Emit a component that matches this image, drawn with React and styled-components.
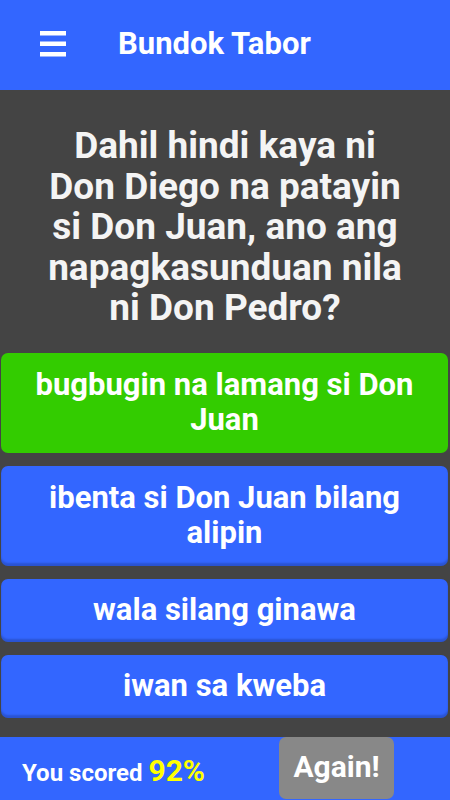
import React from 'react';
import styled, { createGlobalStyle } from 'styled-components';

const GlobalStyle = createGlobalStyle`
    html, body {
        margin: 0;
        padding: 0;
        background: #444444;
    }
    body {
        font-family: Roboto, "Liberation Sans", sans-serif;
    }
`;

const answers = [
    { text: 'bugbugin na lamang si Don Juan', correct: true, tall: true },
    { text: 'ibenta si Don Juan bilang alipin', tall: true },
    { text: 'wala silang ginawa' },
    { text: 'iwan sa kweba' },
];

function MenuIcon() {
    return (
        <svg width="26" height="27" viewBox="0 0 26 27">
            <rect x="0" y="1" width="26" height="4.5" fill="#fff" />
            <rect x="0" y="11.5" width="26" height="4.5" fill="#fff" />
            <rect x="0" y="22" width="26" height="4.5" fill="#fff" />
        </svg>
    );
}

function App() {
    return (
        <Screen>
            <GlobalStyle />
            <Header>
                <MenuButton><MenuIcon /></MenuButton>
                <Title>Bundok Tabor</Title>
            </Header>
            <Question>
                Dahil hindi kaya ni Don Diego na patayin si Don Juan, ano ang napagkasunduan nila ni Don Pedro?
            </Question>
            <Answers>
                {answers.map((a) => (
                    <Answer key={a.text} $correct={a.correct} $tall={a.tall}>
                        {a.text}
                    </Answer>
                ))}
            </Answers>
            <Footer>
                <Score>
                    You scored <Percent>92%</Percent>
                </Score>
                <AgainButton>Again!</AgainButton>
            </Footer>
        </Screen>
    );
}

const Screen = styled.div`
    display: flex;
    flex-direction: column;
    width: 450px;
    height: 800px;
    background: #444444;
    overflow: hidden;
`;

const Header = styled.div`
    display: flex;
    align-items: center;
    height: 90px;
    flex-shrink: 0;
    background: #3366ff;
    padding-left: 40px;
    box-sizing: border-box;
`;

const MenuButton = styled.div`
    display: flex;
    width: 26px;
    height: 27px;
    margin-right: 52px;
    margin-top: -4px;
`;

const Title = styled.div`
    color: #fff;
    font-size: 31px;
    font-weight: 700;
    margin-top: -4px;
`;

const Question = styled.div`
    color: #f4f4f4;
    font-size: 37px;
    font-weight: 700;
    line-height: 40.5px;
    text-align: center;
    padding: 36px 40px 0;
    height: 263px;
    box-sizing: border-box;
    flex-shrink: 0;
`;

const Answers = styled.div`
    display: flex;
    flex-direction: column;
    gap: 13px;
    padding: 0 2px 0 1px;
`;

const Answer = styled.div`
    display: flex;
    align-items: center;
    justify-content: center;
    text-align: center;
    height: ${(p) => (p.$tall ? '100px' : '63px')};
    box-sizing: border-box;
    padding: 0 26px 3px;
    border-radius: 7px;
    background: ${(p) => (p.$correct ? '#33cc00' : '#3366ff')};
    box-shadow: ${(p) => (p.$correct ? 'none' : 'inset 0 -3px 2px rgba(0, 0, 0, 0.18)')};
    color: #fff;
    font-size: 31px;
    font-weight: 700;
    line-height: 35px;
`;

const Footer = styled.div`
    display: flex;
    align-items: center;
    justify-content: space-between;
    margin-top: auto;
    height: 63px;
    background: #3366ff;
    padding-left: 22px;
    padding-right: 56px;
    box-sizing: border-box;
`;

const Score = styled.div`
    color: #fff;
    font-size: 24px;
    font-weight: 700;
    margin-top: 4px;
`;

const Percent = styled.span`
    color: #ffff00;
    font-size: 30px;
`;

const AgainButton = styled.div`
    display: flex;
    align-items: center;
    justify-content: center;
    width: 115px;
    height: 62px;
    align-self: flex-start;
    padding-bottom: 4px;
    box-sizing: border-box;
    background: #888888;
    border-radius: 7px;
    color: #fff;
    font-size: 30px;
    font-weight: 700;
`;

export default App;
